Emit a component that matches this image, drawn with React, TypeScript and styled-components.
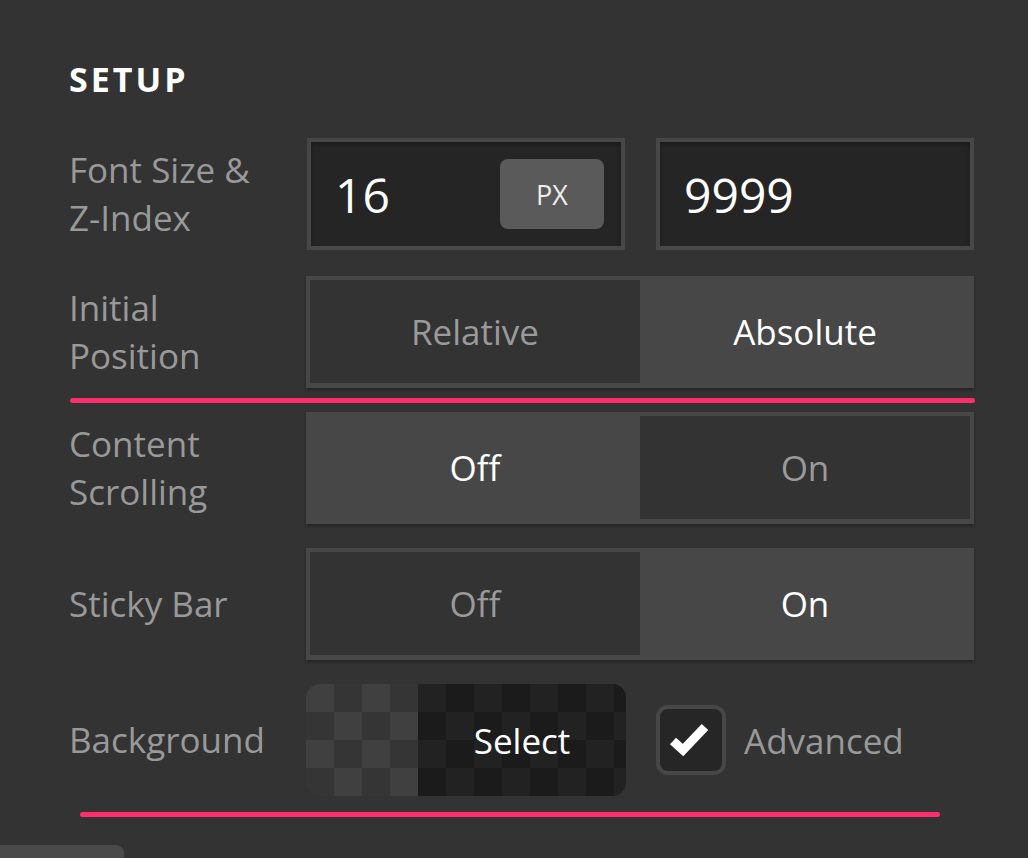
import React from 'react';
import styled, {createGlobalStyle} from 'styled-components';

const GlobalStyle = createGlobalStyle`
    html, body {
        margin: 0;
        padding: 0;
        background: #333333;
    }
    body {
        font-family: "Open Sans", "Liberation Sans", sans-serif;
        -webkit-font-smoothing: antialiased;
    }
`;

type ToggleProps = {
    options: string[];
    active: number;
};

const Toggle = ({options, active}: ToggleProps) => (
    <ToggleGroup>
        {options.map((opt, i) => (
            <Segment key={opt} $active={i === active}>{opt}</Segment>
        ))}
    </ToggleGroup>
);

const CheckIcon = () => (
    <svg width="62" height="62" viewBox="0 0 62 62">
        <polyline
            points="13,32 23,41 45,18"
            fill="none"
            stroke="#ffffff"
            strokeWidth="9"
            strokeLinejoin="miter"
        />
    </svg>
);

const App = () => {
    return (
        <Page>
            <GlobalStyle/>
            <Panel>
                <Heading>SETUP</Heading>

                <Row>
                    <Label>Font Size &amp;<br/>Z-Index</Label>
                    <InputPair>
                        <InputBox>
                            <Value>16</Value>
                            <UnitButton>PX</UnitButton>
                        </InputBox>
                        <InputBox>
                            <Value>9999</Value>
                        </InputBox>
                    </InputPair>
                </Row>

                <Row $top={26}>
                    <Label>Initial<br/>Position</Label>
                    <Toggle options={['Relative', 'Absolute']} active={1}/>
                </Row>

                <Divider $left={1} $width={905} $top={10} $bottom={9}/>

                <Row>
                    <Label>Content<br/>Scrolling</Label>
                    <Toggle options={['Off', 'On']} active={0}/>
                </Row>

                <Row $top={24}>
                    <Label>Sticky Bar</Label>
                    <Toggle options={['Off', 'On']} active={1}/>
                </Row>

                <Row $top={24}>
                    <Label>Background</Label>
                    <BackgroundControls>
                        <SelectButton>
                            <Swatch/>
                            <SelectText>Select</SelectText>
                        </SelectButton>
                        <CheckField>
                            <CheckBox>
                                <CheckIcon/>
                            </CheckBox>
                            <CheckLabel>Advanced</CheckLabel>
                        </CheckField>
                    </BackgroundControls>
                </Row>

                <Divider $left={11} $width={860} $top={16} $bottom={0}/>
            </Panel>
            <ScrollHandle/>
        </Page>
    );
};

export default App;


const Page = styled.div`
    width: 1028px;
    min-height: 858px;
    background: #333333;
    overflow: hidden;
`;

const Panel = styled.div`
    padding: 56px 54px 28px 69px;
`;

const Heading = styled.h2`
    margin: 0 0 36px;
    font-size: 34px;
    line-height: 46px;
    font-weight: 700;
    letter-spacing: 3px;
    color: #ffffff;
`;

const Row = styled.div<{$top?: number}>`
    display: grid;
    grid-template-columns: 237px 668px;
    align-items: center;
    height: 112px;
    margin-top: ${p => p.$top ?? 0}px;
`;

const Label = styled.div`
    font-size: 35px;
    line-height: 48px;
    color: #999999;
`;

const InputPair = styled.div`
    display: grid;
    grid-template-columns: 1fr 1fr;
    gap: 31px;
    height: 112px;
    padding-left: 1px;
`;

const InputBox = styled.div`
    display: flex;
    align-items: center;
    justify-content: space-between;
    box-sizing: border-box;
    height: 112px;
    padding: 0 17px 0 24px;
    background: #252525;
    border: 4px solid #474747;
    box-shadow: inset 0 3px 4px rgba(0, 0, 0, 0.25);
`;

const Value = styled.span`
    font-size: 48px;
    color: #ffffff;
`;

const UnitButton = styled.span`
    display: flex;
    align-items: center;
    justify-content: center;
    width: 104px;
    height: 70px;
    border-radius: 8px;
    background: #5a5a5a;
    font-size: 27px;
    color: #eeeeee;
`;

const ToggleGroup = styled.div`
    display: grid;
    grid-template-columns: 1fr 1fr;
    box-sizing: border-box;
    height: 112px;
    padding: 4px 4px 5px;
    background: #474747;
    box-shadow: 0 2px 3px rgba(0, 0, 0, 0.3);
`;

const Segment = styled.div<{$active: boolean}>`
    display: flex;
    align-items: center;
    justify-content: center;
    font-size: 35px;
    color: ${p => (p.$active ? '#ffffff' : '#9a9a9a')};
    background: ${p => (p.$active ? 'transparent' : '#333333')};
`;

const Divider = styled.div<{$left: number; $width: number; $top: number; $bottom: number}>`
    height: 5px;
    width: ${p => p.$width}px;
    margin: ${p => p.$top}px 0 ${p => p.$bottom}px ${p => p.$left}px;
    border-radius: 3px;
    background: #ff2d6b;
`;

const BackgroundControls = styled.div`
    display: flex;
    align-items: center;
    gap: 30px;
`;

const SelectButton = styled.div`
    display: flex;
    width: 320px;
    height: 112px;
    border-radius: 14px;
    overflow: hidden;
    box-shadow: inset 0 0 6px rgba(0, 0, 0, 0.5);
`;

const Swatch = styled.div`
    width: 112px;
    background: repeating-conic-gradient(#353535 0 25%, #404040 0 50%) 0 0 / 56px 56px;
`;

const SelectText = styled.div`
    flex: 1;
    display: flex;
    align-items: center;
    justify-content: center;
    font-size: 35px;
    color: #ffffff;
    background: repeating-conic-gradient(#1b1b1b 0 25%, #222222 0 50%) 0 0 / 56px 56px;
`;

const CheckField = styled.div`
    display: flex;
    align-items: center;
    gap: 18px;
`;

const CheckBox = styled.div`
    display: flex;
    align-items: center;
    justify-content: center;
    box-sizing: border-box;
    width: 70px;
    height: 70px;
    border: 4px solid #474747;
    border-radius: 12px;
    background: #262626;
`;

const CheckLabel = styled.span`
    font-size: 35px;
    color: #999999;
`;

const ScrollHandle = styled.div`
    width: 124px;
    height: 14px;
    border-radius: 0 8px 0 0;
    background: #4a4a4a;
`;
